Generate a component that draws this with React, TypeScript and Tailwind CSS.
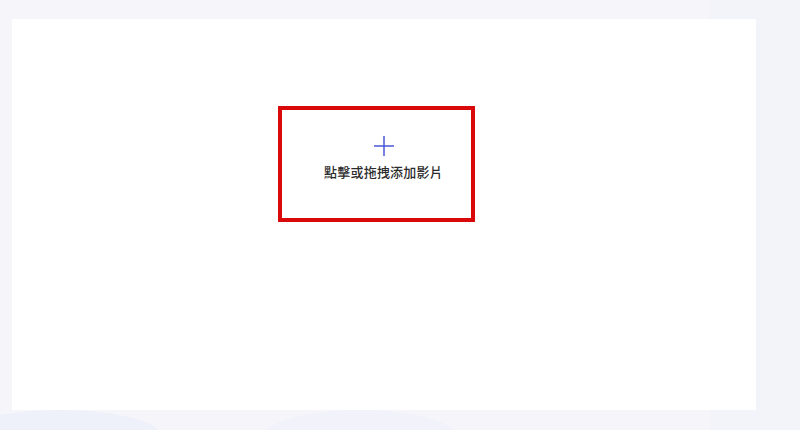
import React from "react";

export default function App() {
  return (
    <div className="w-[800px] h-[430px] overflow-hidden bg-[#f6f6fa] relative" style={{ fontFamily: '"Noto Sans CJK TC", "Noto Sans", sans-serif' }}>
      <div className="absolute right-0 top-0 w-[90px] h-[430px] bg-[#f3f3fa]" />
      <div className="absolute left-[-40px] bottom-[-30px] w-[200px] h-[50px] rounded-[50%] bg-[#eef0fa]" />
      <div className="absolute left-[260px] bottom-[-40px] w-[200px] h-[60px] rounded-[50%] bg-[#f1f2fa]" />
      <div className="relative pt-[19px] pl-[12px]">
        <div className="w-[744px] h-[391px] bg-white flex">
          <div className="mt-[87px] ml-[266px] w-[197px] h-[116px] border-4 border-[#d9090b] flex flex-col items-center pl-[14px]">
            <svg width="22" height="22" viewBox="0 0 22 22" className="mt-[25px]">
              <path d="M11 1 V21 M1 11 H21" stroke="#4b5ad6" strokeWidth="1.5" fill="none" />
            </svg>
            <div className="mt-[6px] text-[13px] leading-[18px] text-[#2b2b2b] font-medium tracking-[0.2px]">點擊或拖拽添加影片</div>
          </div>
        </div>
      </div>
    </div>
  );
}
